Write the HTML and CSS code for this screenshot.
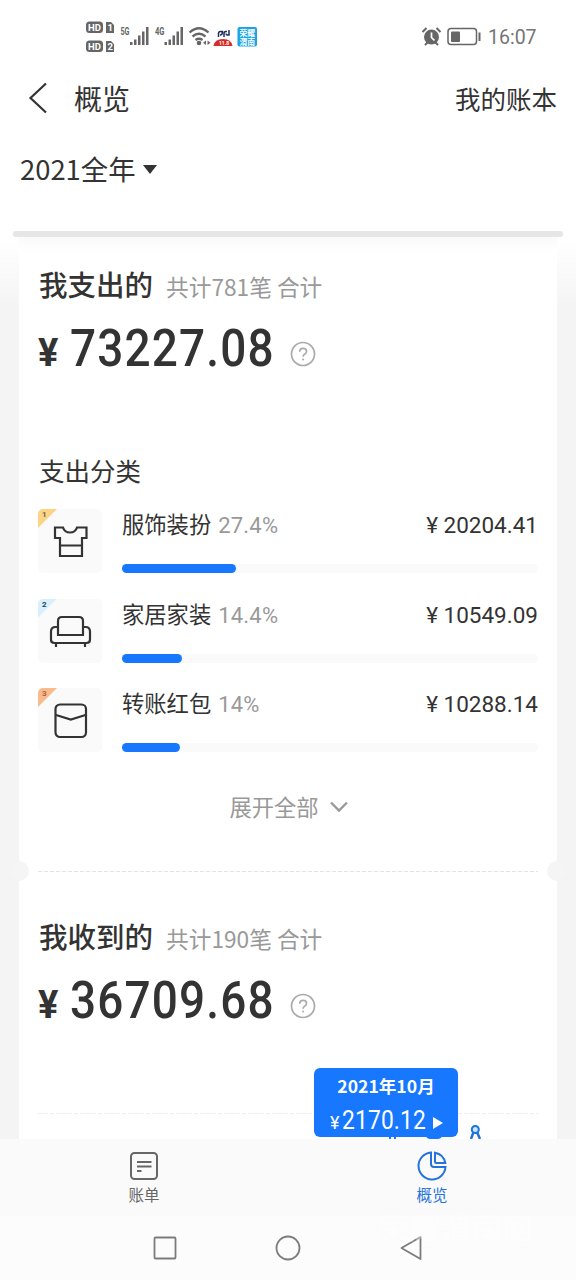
FILE: index.html
```html
<!DOCTYPE html>
<html lang="zh-CN">
<head>
<meta charset="utf-8">
<title>概览</title>
<link rel="stylesheet" href="styles.css">
</head>
<body>
<div class="app">
  <header class="status">
    <svg class="status-icons" width="180" height="40" viewBox="80 18 180 40">
      <g fill="#666">
        <rect x="86" y="21.500" width="17" height="11.500" rx="3.500"/><rect x="86" y="40.500" width="17" height="11.500" rx="3.500"/>
        <path d="M106 22h5l3 3v8h-8zM106 41h5l3 3v8h-8z"/>
        <path d="M130 42h2.500v3h-2.500zM134 39.500h2.500v5.500h-2.500zM138 35.500h2.500v9.500h-2.500zM142 31.500h2.500v13.500h-2.500zM146 27h2.500v18h-2.500z"/>
        <path d="M164.500 42h2.500v3h-2.500zM168.500 39.500h2.500v5.500h-2.500zM172.500 35.500h2.500v9.500h-2.500zM176.500 31.500h2.500v13.500h-2.500zM180.500 27h2.500v18h-2.500z"/>
        <circle cx="199" cy="43" r="2.300"/>
        <path d="M206 40.500v4.500l-3-2.250zM207.500 40.500v4.500l3-2.250z"/>
      </g>
      <g fill="none" stroke="#666" stroke-width="2.300"><path d="M189.500 32.500q9.500-8.500 19 0M192.500 36.500q6.500-5.500 13 0M195.500 40q3.500-2.500 7 0"/></g>
      <text class="hd" x="88" y="31">HD</text><text class="hd" x="88" y="50">HD</text>
      <text class="hd" x="107.500" y="31">1</text><text class="hd" x="107.500" y="50">2</text>
      <text class="gen" x="120.500" y="34.500" textLength="9" lengthAdjust="spacingAndGlyphs">5G</text><text class="gen" x="155" y="34.500" textLength="9.500" lengthAdjust="spacingAndGlyphs">4G</text>
      <path d="M218.500 37v-3.500q0-2 2-2h2q0 3.500-2.500 3.500M224 37v-3.500q0-2 2-2h1M229 30v5h-1.500q-1.500 0-1.500-1.500" fill="none" stroke="#1b2d60" stroke-width="1.500"/>
      <path d="M213.500 46q1-7 9.500-7t9.500 7z" fill="#d52d28"/>
      <text x="219" y="45" font-size="5" font-family="Roboto" font-weight="700" fill="#fff">11.8</text>
      <rect x="237.500" y="27" width="19.500" height="19.500" rx="2" fill="#1ba4e4"/>
      <text class="badge" x="239.500" y="35.500">荣耀</text><text class="badge" x="239.500" y="44.500">渭南</text>
    </svg>
    <div class="status-right">
      <svg width="62" height="24" viewBox="420 25 62 24">
        <circle cx="431.500" cy="37" r="7.500" fill="#666"/>
        <path d="M422.500 32l4-4M436.500 28l4 4M425 45l3-3M438 45l-3-3" stroke="#666" stroke-width="2"/>
        <path d="M431.500 32.500v5l3 3" fill="none" stroke="#fff" stroke-width="1.700"/>
        <rect x="448" y="28.500" width="28.500" height="16" rx="3" fill="none" stroke="#666" stroke-width="1.500"/>
        <rect x="451" y="31.500" width="9" height="10.500" rx="1" fill="#666"/><path d="M479.500 32.500v8.500" stroke="#666" stroke-width="2"/>
      </svg>
      <span class="clock">16:07</span>
    </div>
  </header>
  <nav class="title-bar">
    <svg class="back" width="22" height="34" viewBox="0 0 22 34"><path d="M19 2.500L3.500 17l15.500 14.500" fill="none" stroke="#333" stroke-width="2.200"/></svg>
    <h1>概览</h1>
    <a class="book">我的账本</a>
  </nav>
  <div class="filter"><span>2021全年</span><i class="caret"></i></div>
  <main class="content">
    <div class="slot"></div>
    <div class="card">
      <section class="expense">
        <div class="heading"><h2>我支出的</h2><span>共计781笔 合计</span></div>
        <div class="amount"><span class="yen">¥</span><span class="total">73227.08</span>
          <svg class="help" width="26" height="26" viewBox="0 0 26 26"><circle cx="13" cy="13" r="11.500"/><path d="M9.700 10.800q0-3.500 3.400-3.500t3.400 3.100q0 1.700-2 2.900-1.400.9-1.400 2.500"/><circle class="dot" cx="13.100" cy="18.500" r="1"/></svg>
        </div>
        <h3>支出分类</h3>
        <div class="category">
          <div class="thumb gold"><b>1</b><svg width="44" height="44" viewBox="0 0 44 44"><path d="M6 7.500h8q1.500 5 7 5t7-5h9.500V18H33v18H11V18H6zM11 25.500h22"/></svg></div>
          <div class="detail"><div class="line"><span>服饰装扮</span><em>27.4%</em><strong>¥ 20204.41</strong></div><div class="track"><i style="width:27.4%"></i></div></div>
        </div>
        <div class="category">
          <div class="thumb sky"><b>2</b><svg width="44" height="44" viewBox="0 0 44 44"><path d="M9 25V11q0-4 4-4h17q4 0 4 4v14zM9 17H6.500Q2 17 2 21.500v8Q2 33 5.500 33h32q3.500 0 3.500-3.500v-8Q41 17 36.500 17H34M7 33v4M36 33v4"/></svg></div>
          <div class="detail"><div class="line"><span>家居家装</span><em>14.4%</em><strong>¥ 10549.09</strong></div><div class="track"><i style="width:14.4%"></i></div></div>
        </div>
        <div class="category">
          <div class="thumb coral"><b>3</b><svg width="44" height="44" viewBox="0 0 44 44"><rect x="6.500" y="5.500" width="30.500" height="32.500" rx="4.500"/><path d="M7 16l14.800 4.500L36.500 16"/></svg></div>
          <div class="detail"><div class="line"><span>转账红包</span><em>14%</em><strong>¥ 10288.14</strong></div><div class="track"><i style="width:14%"></i></div></div>
        </div>
        <div class="expand">展开全部<svg width="20" height="14" viewBox="0 0 20 14"><path d="M2 3.500l8 8 8-8" fill="none" stroke="#999" stroke-width="2.400"/></svg></div>
      </section>
      <div class="tear"></div>
      <section class="income">
        <div class="heading"><h2>我收到的</h2><span>共计190笔 合计</span></div>
        <div class="amount"><span class="yen">¥</span><span class="total">36709.68</span>
          <svg class="help" width="26" height="26" viewBox="0 0 26 26"><circle cx="13" cy="13" r="11.500"/><path d="M9.700 10.800q0-3.500 3.400-3.500t3.400 3.100q0 1.700-2 2.900-1.400.9-1.400 2.500"/><circle class="dot" cx="13.100" cy="18.500" r="1"/></svg>
        </div>
        <div class="chart">
          <svg class="marks" width="110" height="16" viewBox="380 1123 110 16"><path d="M389 1136h2v3h-2zM394 1136h2v3h-2zM426 1136h16q-1 3-4 3h-8q-3 0-4-3z" fill="#1777ff"/><path d="M473.500 1132l-2.500 7M477 1132l3 7" stroke="#246fd8" stroke-width="2.500"/><circle cx="475.300" cy="1129.500" r="3.500" fill="#c9e6ff" stroke="#1777d8" stroke-width="2"/></svg>
          <div class="tip"><div class="tip-month">2021年10月</div><div class="tip-sum"><small>¥</small><span>2170.12</span><i></i></div></div>
        </div>
      </section>
    </div>
  </main>
  <footer class="tabs">
    <a class="tab"><svg width="32" height="32" viewBox="0 0 32 32" fill="none" stroke="#666" stroke-width="2"><rect x="3" y="3" width="26" height="26" rx="3.500"/><path d="M9 12h14.500M9 16.500h14.500M9 21h4.500"/></svg><span>账单</span></a>
    <a class="tab active"><svg width="32" height="32" viewBox="0 0 32 32" fill="none" stroke="#2672dc" stroke-width="2"><path d="M15 2.500A13.500 13.500 0 1 0 29.500 17H18q-3 0-3-3z"/><path d="M19 2.800A13 13 0 0 1 29.300 13H20.500q-1.500 0-1.500-1.500z"/></svg><span>概览</span></a>
  </footer>
  <div class="system-nav">
    <svg width="26" height="26" viewBox="0 0 26 26"><rect x="2.500" y="2.500" width="21" height="21" rx="1"/></svg>
    <svg width="26" height="26" viewBox="0 0 26 26"><circle cx="13" cy="13" r="11.500"/></svg>
    <svg width="26" height="26" viewBox="0 0 26 26"><path d="M22.500 2v22L3.500 13z" stroke-linejoin="round"/></svg>
    <span class="watermark">荣耀渭南网</span>
  </div>
</div>
</body>
</html>
```
FILE: styles.css
```css
* { box-sizing: border-box; }
body { margin: 0; background: #fff; color: #333; font-family: "Noto Sans CJK SC", sans-serif; }
h1, h2, h3 { margin: 0; font-weight: 400; }
i, em { font-style: normal; }
svg { display: block; flex: none; }
.app { width: 576px; height: 1280px; display: flex; flex-direction: column; overflow: hidden; }

.status { height: 70px; display: flex; justify-content: space-between; padding: 18px 40px 0 80px; flex: none; }
.hd { font: 700 9.5px Roboto, sans-serif; fill: #fff; }
.gen { font: 700 10px Roboto, sans-serif; fill: #666; }
.badge { font: 700 7.8px "Noto Sans CJK SC", sans-serif; fill: #fff; }
.status-right { display: flex; padding-top: 7px; height: 31px; }
.clock { font: 400 19.5px/25px Roboto, sans-serif; color: #757575; width: 54px; padding-left: 6px; letter-spacing: 0; white-space: nowrap; }

.title-bar { height: 56px; display: flex; align-items: center; padding: 0 19px 0 27px; flex: none; }
.back { margin-right: 25px; }
.title-bar h1 { font-size: 28px; line-height: 40px; }
.book { margin-left: auto; font-size: 25.5px; line-height: 40px; }
.filter { height: 105px; padding: 22px 0 0 20px; display: flex; align-items: flex-start; font-size: 27.4px; line-height: 40px; flex: none; }
.caret { margin: 17px 0 0 7px; border: 7.5px solid transparent; border-top: 9px solid #333; border-bottom: 0; }

.content { height: 908px; flex: none; background: linear-gradient(#fff 0, #fff 10px, #f4f4f4 75px); overflow: hidden; }
.slot { height: 6px; margin: 0 13px; background: #e6e6e6; border-radius: 3px; }
.card { margin: 0 19px; height: 902px; background: linear-gradient(#fafafa, #fff 16px); }
.expense { height: 634px; padding: 27px 19px 0; }
.heading { height: 40px; display: flex; align-items: center; padding-left: 1px; }
.heading h2 { font-size: 28.5px; line-height: 40px; font-weight: 500; }
.heading span { font-size: 22.7px; line-height: 32px; color: #999; margin: 6px 0 0 13px; white-space: pre; }
.amount { height: 67px; display: flex; align-items: baseline; font-family: Roboto, sans-serif; font-weight: 500; }
.yen { width: 32px; font-size: 38px; line-height: 66px; font-weight: 700; }
.total { width: 220px; font-size: 51px; line-height: 89px; letter-spacing: 1.3px; transform: scaleX(.9); transform-origin: left; }
.help { align-self: flex-start; margin-top: 37px; fill: none; stroke: #aaa; stroke-width: 1.7; }
.dot { fill: #aaa; stroke: none; }
.expense h3 { font-size: 25.5px; line-height: 38px; margin: 80px 0 20px 1px; }

.category { height: 64px; display: flex; gap: 20px; margin-bottom: 25.5px; }
.thumb { width: 64px; height: 64px; flex: none; padding: 11px 0 0 11px; background: #fafafa; border-radius: 5px; position: relative; overflow: hidden; }
.thumb svg { fill: none; stroke: #333; stroke-width: 2.2; }
.thumb b { position: absolute; left: 0; top: 0; width: 19px; height: 19px; padding: 2px 0 0 4px; font: 700 8px/8px Roboto, sans-serif; color: #665; clip-path: polygon(0 0, 100% 0, 0 100%); }
.gold b { background: #fbd486; }
.sky b { background: #d9effb; color: #245; }
.coral b { background: #fabb8c; color: #a64; }
.detail { flex: 1; margin-top: -2px; }
.line { height: 32px; display: flex; align-items: baseline; font-size: 22.3px; line-height: 32px; white-space: pre; }
.line em { color: #999; margin-left: 7px; font: 400 22px/32px Roboto, sans-serif; letter-spacing: .2px; }
.line strong { margin-left: auto; font: 400 22.5px/32px Roboto, sans-serif; }
.track { height: 9px; margin-top: 25px; border-radius: 5px; background: #fafafa; }
.track i { display: block; height: 9px; border-radius: 5px; background: #1777ff; }
.expand { display: flex; align-items: center; justify-content: center; gap: 10px; height: 34px; margin: 37px 0 0 2px; font-size: 22.3px; line-height: 34px; color: #999; }

.tear { height: 1px; margin: 0 19px; position: relative; background: repeating-linear-gradient(90deg, #e2e2e2 0 4px, transparent 4px 6px); }
.tear::before, .tear::after { content: ""; position: absolute; top: -10px; width: 20px; height: 20px; border-radius: 50%; background: #f5f5f5; }
.tear::before { left: -29px; }
.tear::after { right: -29px; }
.income { padding: 44px 19px 0; }
.chart { height: 116px; position: relative; }
.chart::before { content: ""; display: block; height: 1px; position: relative; top: 90px; background: repeating-linear-gradient(90deg, #eee 0 4px, transparent 4px 6px); }
.marks { position: absolute; left: 342px; top: 100px; }
.tip { position: absolute; left: 276px; top: 45px; width: 144px; height: 69px; border-radius: 6px; background: #1777ff; color: #fff; }
.tip-month { text-align: center; font-size: 17.6px; line-height: 24px; padding-top: 6px; font-weight: 700; height: 34px; }
.tip-sum { display: flex; align-items: baseline; padding-left: 16px; line-height: 37px; font-family: Roboto, sans-serif; }
.tip-sum small { font-size: 18px; width: 12px; }
.tip-sum span { font-size: 25px; letter-spacing: .2px; width: 91px; transform: scaleX(.91); transform-origin: left; }
.tip-sum i { border: 6px solid transparent; border-left: 10px solid #fff; border-right: 0; }

.tabs { height: 77px; flex: none; display: flex; background: #fafafa; }
.tab { flex: 1; display: flex; flex-direction: column; align-items: center; padding-top: 11px; color: #666; font-size: 15.5px; line-height: 24px; }
.active { color: #2672dc; }
.system-nav { height: 64px; flex: none; display: flex; gap: 97px; padding: 19px 0 0 152px; background: #fcfcfc; position: relative; }
.system-nav svg { fill: none; stroke: #7c7c7c; stroke-width: 1.8; }
.watermark { position: absolute; left: 378px; top: -10px; font-size: 31px; line-height: 40px; font-weight: 700; color: #fff; opacity: .35; }
```
